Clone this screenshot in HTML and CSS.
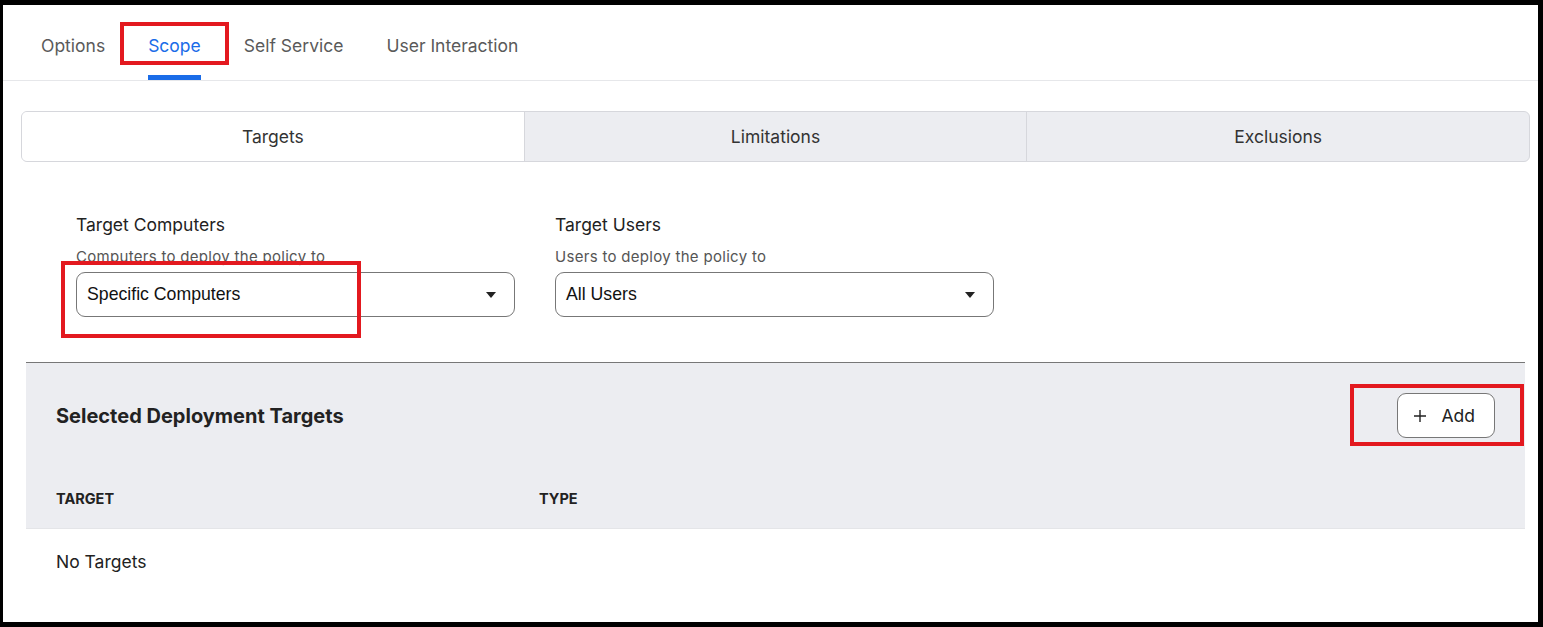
FILE: index.html
```html
<!DOCTYPE html>
<html lang="en">
<head>
  <meta charset="UTF-8" />
  <title>Policy Scope</title>
  <link rel="stylesheet" href="styles.css">
</head>
<body>
  <div class="frame">
    <nav class="tabs">
      <a class="tab">Options</a>
      <a class="tab active">Scope</a>
      <a class="tab">Self Service</a>
      <a class="tab">User Interaction</a>
    </nav>

    <div class="content">
      <div class="segments">
        <div class="segment selected">Targets</div>
        <div class="segment">Limitations</div>
        <div class="segment">Exclusions</div>
      </div>

      <div class="fields">
        <div class="field">
          <div class="field-label">Target Computers</div>
          <div class="field-help">Computers to deploy the policy to</div>
          <div class="select">
            <span>Specific Computers</span>
            <span class="caret"></span>
          </div>
        </div>
        <div class="field">
          <div class="field-label">Target Users</div>
          <div class="field-help">Users to deploy the policy to</div>
          <div class="select">
            <span>All Users</span>
            <span class="caret"></span>
          </div>
        </div>
      </div>

      <section class="targets">
        <div class="targets-head">
          <h2>Selected Deployment Targets</h2>
          <button class="add-btn">
            <svg width="14" height="14" viewBox="0 0 14 14"><path d="M7 1v12M1 7h12" stroke="#222" stroke-width="1.4" fill="none"/></svg>
            Add
          </button>
        </div>
        <div class="table-head">
          <div>TARGET</div>
          <div>TYPE</div>
        </div>
        <div class="table-row">No Targets</div>
      </section>
    </div>

    <!-- highlight marks -->
    <div class="mark mark-scope"></div>
    <div class="mark mark-select"></div>
    <div class="mark mark-add"></div>
  </div>
</body>
</html>
```

FILE: styles.css
```css
* {
  box-sizing: border-box;
}
body {
  margin: 0;
  background: #000;
  font-family: Inter, "Noto Sans", sans-serif;
  color: #222;
}
.frame {
  position: relative;
  margin: 5px 5px 0 3px;
  height: 617px;
  background: #fff;
  overflow: hidden;
}

/* top tabs */
.tabs {
  display: flex;
  gap: 43px;
  padding-left: 38px;
  height: 76px;
  border-bottom: 1px solid #e6e7ea;
}
.tab {
  height: 75px;
  padding-top: 30px;
  line-height: 22px;
  font-size: 17.5px;
  color: #5a5a5a;
  border-bottom: 5px solid transparent;
}
.tab.active {
  color: #1a6ce8;
  border-bottom-color: #1a6ce8;
}

.content {
  padding: 30px 8px 0 18px;
}

/* segmented control */
.segments {
  display: flex;
  height: 51px;
  border: 1px solid #d6d7dc;
  border-radius: 6px;
  overflow: hidden;
  background: #ecedf1;
}
.segment {
  flex: 1;
  display: flex;
  align-items: center;
  justify-content: center;
  font-size: 17.5px;
  color: #333;
  border-left: 1px solid #d6d7dc;
}
.segment:first-child {
  border-left: none;
}
.segment.selected {
  background: #fff;
}

/* target fields */
.fields {
  display: flex;
  gap: 40px;
  padding: 52px 0 0 55px;
}
.field {
  width: 439px;
}
.field-label {
  font-size: 17.5px;
  line-height: 22px;
  color: #222;
}
.field-help {
  margin-top: 11px;
  font-size: 15px;
  line-height: 20px;
  color: #555;
  letter-spacing: 0.3px;
}
.select {
  display: flex;
  align-items: center;
  justify-content: space-between;
  margin-top: 5px;
  height: 45px;
  padding: 0 18px 0 10px;
  border: 1px solid #777;
  border-radius: 9px;
  font-family: "Liberation Sans", Arial, sans-serif;
  font-size: 17.7px;
  color: #111;
}
.caret {
  width: 0;
  height: 0;
  border-left: 5px solid transparent;
  border-right: 5px solid transparent;
  border-top: 6px solid #222;
}

/* selected targets panel */
.targets {
  margin: 45px 5px 0 5px;
  border-top: 1px solid #777;
}
.targets-head {
  display: flex;
  align-items: center;
  justify-content: space-between;
  padding: 30px;
  background: #ecedf1;
}
.targets-head h2 {
  margin: 0;
  font-size: 20px;
  font-weight: 700;
  color: #222;
}
.add-btn {
  display: flex;
  align-items: center;
  gap: 14px;
  height: 45px;
  padding: 0 19px 0 15px;
  background: #fff;
  border: 1px solid #777;
  border-radius: 9px;
  font-family: inherit;
  font-size: 17.5px;
  color: #222;
}
.table-head {
  display: grid;
  grid-template-columns: 483px 1fr;
  align-items: center;
  height: 61px;
  padding: 0 30px;
  background: #ecedf1;
  border-bottom: 1px solid #e4e5e8;
  font-size: 14.5px;
  font-weight: 700;
  color: #222;
}
.table-row {
  display: flex;
  align-items: center;
  height: 65px;
  padding: 0 30px;
  font-size: 17.5px;
  color: #222;
}

/* red highlight marks drawn over the page */
.mark {
  position: absolute;
  border: 4px solid #e3191f;
  pointer-events: none;
}
.mark-scope {
  left: 117px;
  top: 17px;
  width: 109px;
  height: 43px;
}
.mark-select {
  left: 58px;
  top: 256px;
  width: 300px;
  height: 77px;
}
.mark-add {
  left: 1347px;
  top: 379px;
  width: 174px;
  height: 62px;
}
```
